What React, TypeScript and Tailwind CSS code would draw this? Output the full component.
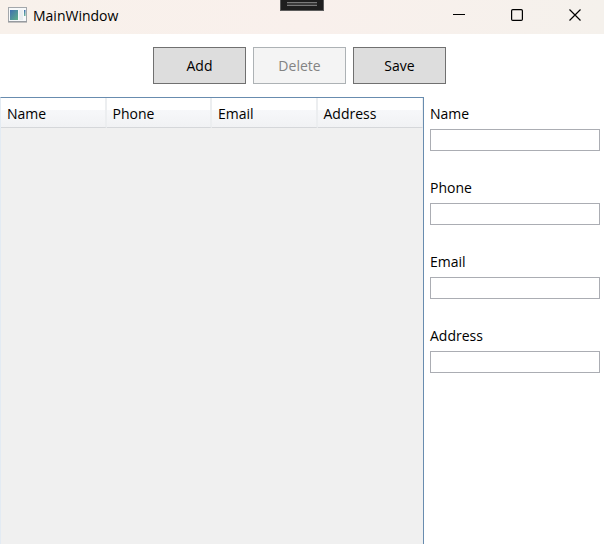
import { useState } from "react";

const columns = ["Name", "Phone", "Email", "Address"];

function AppIcon() {
  return (
    <svg width="19" height="16" viewBox="0 0 19 16" aria-hidden="true">
      <defs>
        <linearGradient id="pane" x1="0" y1="0" x2="1" y2="1">
          <stop offset="0" stopColor="#3f6fb0" />
          <stop offset="1" stopColor="#5fb088" />
        </linearGradient>
        <linearGradient id="strip" x1="0" y1="0" x2="0" y2="1">
          <stop offset="0" stopColor="#3f6fb0" />
          <stop offset="1" stopColor="#6cb79a" />
        </linearGradient>
      </defs>
      <rect x="0.5" y="0.5" width="18" height="14" fill="#f7f9fa" stroke="#a3a7ab" />
      <path d="M0 15h19" stroke="#8b8f94" />
      <rect x="2" y="3" width="8" height="10" fill="url(#pane)" />
      <rect x="11" y="3" width="4" height="10" fill="#e9edf0" />
      <rect x="16" y="3" width="1.5" height="6" fill="url(#strip)" />
    </svg>
  );
}

function TitleBar() {
  return (
    <header className="relative flex h-[34px] items-center bg-linear-to-r from-[#f8f1eb] via-[#f9f0ec] to-[#f5f1ec] pb-1 pl-2">
      <AppIcon />
      <h1 className="ml-1.5 grow pt-0.5 text-sm">MainWindow</h1>
      <div className="absolute left-1/2 top-0 flex h-[11px] w-11 -translate-x-1/2 flex-col items-center border border-t-0 border-[#5c5c5c] bg-[#1f1f1f] pt-0.5">
        <span className="h-1 w-[30px] border-y border-[#7a7a7a] bg-[#3a3a3a]" />
      </div>
      <button aria-label="Minimize" className="flex h-full w-[58px] items-center justify-center">
        <svg width="12" height="12"><path d="M0 5.5h12" stroke="#000" /></svg>
      </button>
      <button aria-label="Maximize" className="flex h-full w-[58px] items-center justify-center">
        <svg width="12" height="12"><rect x="0.6" y="0.6" width="10.8" height="10.8" rx="1.2" fill="none" stroke="#000" strokeWidth="1.2" /></svg>
      </button>
      <button aria-label="Close" className="flex h-full w-[58px] items-center justify-center">
        <svg width="12" height="12"><path d="M0.5 0.5l11 11M11.5 0.5l-11 11" stroke="#000" strokeWidth="1.2" /></svg>
      </button>
    </header>
  );
}

function Field({ label }: { label: string }) {
  const [value, setValue] = useState("");
  const id = label.toLowerCase();
  return (
    <div>
      <label htmlFor={id} className="block h-8 pt-[7px] leading-5">{label}</label>
      <input
        id={id}
        value={value}
        onChange={(e) => setValue(e.target.value)}
        className="block h-[22px] w-full border border-[#abadb3] bg-white px-1 outline-none"
      />
    </div>
  );
}

export default function App() {
  return (
    <div className="flex min-h-screen flex-col bg-white font-['Open_Sans',sans-serif] text-sm text-black">
      <TitleBar />
      <div className="flex justify-center gap-[7px] py-[13px] pr-[5px]">
        <button className="h-[37px] w-[93px] border border-[#707070] bg-[#ddd]">Add</button>
        <button disabled className="h-[37px] w-[93px] border border-[#adb2b5] bg-[#f4f4f4] text-[#838383]">Delete</button>
        <button className="h-[37px] w-[93px] border border-[#707070] bg-[#ddd]">Save</button>
      </div>
      <main className="grid grow grid-cols-[424fr_180fr]">
        <section className="min-w-0 border-x border-t border-[#688caf] border-l-[#e3ebf3] bg-[#f0f0f0]">
          <table className="w-full table-fixed border-separate border-spacing-0">
            <thead>
              <tr>
                {columns.map((c) => (
                  <th
                    key={c}
                    className="h-[30px] border-b border-r-2 border-b-[#d5d7da] border-r-[#eceef0] bg-linear-to-b from-white from-40% via-[#f7f8fa] via-40% to-[#f1f2f4] p-0 pl-1.5 pt-0.5 text-left font-normal last:border-r"
                  >
                    {c}
                  </th>
                ))}
              </tr>
            </thead>
          </table>
        </section>
        <form className="flex min-w-0 flex-col gap-5 pl-1.5 pr-1">
          {columns.map((c) => <Field key={c} label={c} />)}
        </form>
      </main>
    </div>
  );
}
